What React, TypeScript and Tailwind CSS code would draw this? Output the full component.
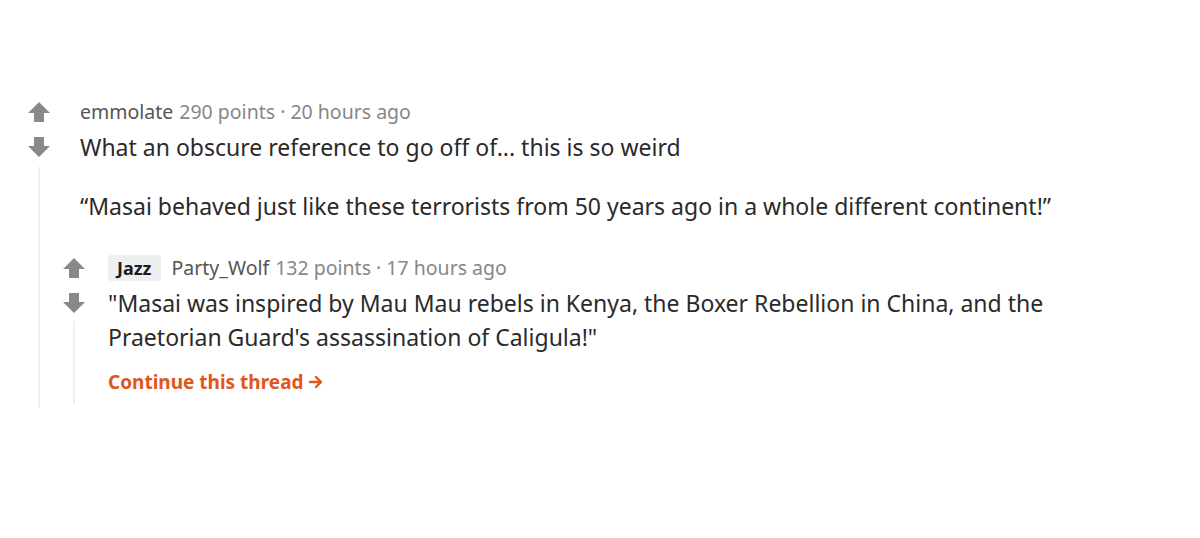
import React from "react";

function Arrow({ down = false }: { down?: boolean }) {
  return (
    <svg
      width="22"
      height="20"
      viewBox="0 0 22 20"
      className={down ? "rotate-180" : ""}
    >
      <path d="M11 0 L22 11 L16 11 L16 20 L6 20 L6 11 L0 11 Z" fill="#878a8c" />
    </svg>
  );
}

function Votes() {
  return (
    <div className="flex flex-col items-center gap-[15px]">
      <Arrow />
      <Arrow down />
    </div>
  );
}

export default function App() {
  return (
    <div
      className="h-[538px] w-[1200px] bg-white pt-[102px] pl-[28px]"
      style={{ fontFamily: '"Noto Sans", sans-serif' }}
    >
      <div className="flex">
        {/* parent thread column */}
        <div className="flex w-[22px] flex-col items-center">
          <Votes />
          <div className="mt-[10px] w-[2px] flex-1 bg-[#edeff1]" />
        </div>

        <div className="ml-[13px] flex-1 pb-[4px]">
          <div className="pl-[17px]">
            <div className="-mt-[2px] flex items-baseline gap-[6px] text-[19.5px] leading-[24px] text-[#878787]">
              <span className="text-[#555]">emmolate</span>
              <span>290 points · 20 hours ago</span>
            </div>
            <div className="mt-[8px] text-[23px] leading-[30px] text-[#2a2a2a]">
              <p>What an obscure reference to go off of... this is so weird</p>
              <p className="mt-[29px]">
                “Masai behaved just like these terrorists from 50 years ago in a
                whole different continent!”
              </p>
            </div>
          </div>

          {/* child comment */}
          <div className="mt-[34px] flex">
            <div className="flex w-[22px] flex-col items-center pt-[3px]">
              <Votes />
              <div className="mt-[8px] w-[2px] flex-1 bg-[#edeff1]" />
            </div>
            <div className="ml-[23px] flex-1 pb-[9px]">
              <div className="flex items-center gap-[11px] text-[19.5px] leading-[26px] text-[#878787]">
                <span className="rounded-[3px] bg-[#edeff1] px-[9px] text-[18px] font-bold text-[#1c1c1c]">
                  Jazz
                </span>
                <span className="flex items-baseline gap-[6px]">
                  <span className="text-[#555]">Party_Wolf</span>
                  <span>132 points · 17 hours ago</span>
                </span>
              </div>
              <p className="mt-[5px] text-[23px] leading-[34px] text-[#2a2a2a]">
                "Masai was inspired by Mau Mau rebels in Kenya, the Boxer Rebellion
                in China, and the
                <br />
                Praetorian Guard's assassination of Caligula!"
              </p>
              <div className="mt-[15px] flex items-center gap-[4px] text-[19px] font-bold leading-[26px] text-[#e0561c]">
                <span>Continue this thread</span>
                <svg width="16" height="16" viewBox="0 0 16 16" fill="none">
                  <path
                    d="M2 8 H13 M8 3 L13 8 L8 13"
                    stroke="#e0561c"
                    strokeWidth="2.4"
                    strokeLinecap="round"
                    strokeLinejoin="round"
                  />
                </svg>
              </div>
            </div>
          </div>
        </div>
      </div>
    </div>
  );
}
